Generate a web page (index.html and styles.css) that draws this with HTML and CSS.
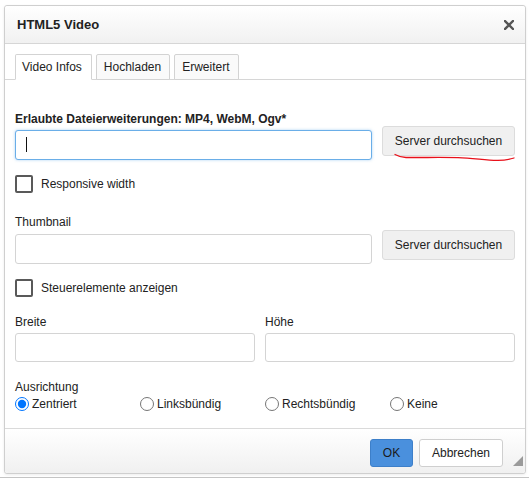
FILE: index.html
```
<!DOCTYPE html>
<html lang="de">
<head>
<meta charset="utf-8">
<title>HTML5 Video</title>
<link rel="stylesheet" href="styles.css">
</head>
<body>
<div class="dialog">
  <div class="titlebar">
    <span class="title">HTML5 Video</span>
    <svg class="close" width="10" height="10" viewBox="0 0 10 10"><path d="M1 1L9 9M9 1L1 9" stroke="#555" stroke-width="2.4" stroke-linecap="square"/></svg>
  </div>
  <div class="tabs">
    <div class="tab active">Video Infos</div>
    <div class="tab">Hochladen</div>
    <div class="tab">Erweitert</div>
  </div>
  <div class="content">
    <div class="row first">
      <div class="col">
        <div class="label bold">Erlaubte Dateierweiterungen: MP4, WebM, Ogv*</div>
        <div class="field-wrap">
          <input class="field focused" type="text">
          <span class="caret"></span>
        </div>
      </div>
      <div class="browse-wrap">
        <button class="btn browse">Server durchsuchen</button>
        <svg class="scribble" width="124" height="10" viewBox="0 0 124 10"><path d="M2 1.5 C5 3.2 8 4.3 13 4.5 C30 4.6 50 4.3 65 4.6 C80 5 92 7.2 104 7.4 C111 7.5 116 6.6 121 5" fill="none" stroke="#e8101a" stroke-width="1.3" stroke-linecap="round"/></svg>
      </div>
    </div>
    <div class="check cb1"><span class="box"></span><span>Responsive width</span></div>
    <div class="row second">
      <div class="col">
        <div class="label">Thumbnail</div>
        <input class="field" type="text">
      </div>
      <div class="browse-wrap">
        <button class="btn browse">Server durchsuchen</button>
      </div>
    </div>
    <div class="check cb2"><span class="box"></span><span>Steuerelemente anzeigen</span></div>
    <div class="dims">
      <div class="col">
        <div class="label">Breite</div>
        <input class="field" type="text">
      </div>
      <div class="col">
        <div class="label">Höhe</div>
        <input class="field" type="text">
      </div>
    </div>
    <div class="label align-label">Ausrichtung</div>
    <div class="radios">
      <label class="radio"><input type="radio" name="a" checked><span>Zentriert</span></label>
      <label class="radio"><input type="radio" name="a"><span>Linksbündig</span></label>
      <label class="radio"><input type="radio" name="a"><span>Rechtsbündig</span></label>
      <label class="radio"><input type="radio" name="a"><span>Keine</span></label>
    </div>
  </div>
  <div class="footer">
    <button class="btn ok">OK</button>
    <button class="btn cancel">Abbrechen</button>
    <svg class="resize" width="10" height="10" viewBox="0 0 10 10"><path d="M10 0L10 10L0 10Z" fill="#9a9a9a"/></svg>
  </div>
</div>
<div class="page-line"></div>
</body>
</html>
```
FILE: styles.css
```
html, body {
  margin: 0;
  padding: 0;
  background: #ffffff;
}
body {
  font-family: "Liberation Sans", Arial, sans-serif;
  font-size: 12px;
  color: #222;
  padding: 5px 0 0 4px;
  width: 529px;
  height: 479px;
  box-sizing: border-box;
  overflow: hidden;
}
.dialog {
  width: 522px;
  height: 469px;
  box-sizing: border-box;
  border: 1px solid #cfcfcf;
  border-radius: 3px;
  background: #fff;
  display: flex;
  flex-direction: column;
  box-shadow: 0 1px 3px rgba(0,0,0,0.08);
}
.titlebar {
  height: 37px;
  flex: none;
  border-bottom: 1px solid #d6d6d6;
  background: linear-gradient(#ffffff, #f1f1f1);
  display: flex;
  align-items: center;
  justify-content: space-between;
  padding: 0 11px 0 12px;
  border-radius: 3px 3px 0 0;
}
.title {
  font-weight: bold;
  font-size: 13px;
  color: #222;
}
.close { display: block; }
.tabs {
  display: flex;
  flex: none;
  gap: 4px;
  padding: 10px 10px 0;
  border-bottom: 1px solid #d6d6d6;
}
.tab {
  height: 26px;
  box-sizing: border-box;
  line-height: 24px;
  padding: 0 8px 0 7px;
  border: 1px solid #d3d3d3;
  border-radius: 2px 2px 0 0;
  background: #fafafa;
  margin-bottom: -1px;
  color: #222;
}
.tab.active {
  background: #fff;
  border-bottom-color: #fff;
  padding: 0 9px 0 6px;
}
.content {
  flex: 1;
  padding: 31px 10px 0 10px;
}
.label {
  line-height: 16px;
  color: #222;
}
.bold { font-weight: bold; }
.row {
  display: flex;
  align-items: flex-end;
  gap: 10px;
}
.col {
  display: flex;
  flex-direction: column;
}
.row .col { width: 357px; }
.field {
  display: block;
  width: 100%;
  height: 30px;
  box-sizing: border-box;
  border: 1px solid #d4d4d4;
  border-radius: 3px;
  background: #fff;
  margin: 0;
  padding: 0 8px;
  font: inherit;
  outline: none;
}
.first .label { margin-bottom: 3px; }
.second .label { margin-bottom: 4px; }
.field-wrap { position: relative; }
.field.focused {
  border-color: #6aaee8;
  box-shadow: 0 0 3px rgba(102, 170, 232, 0.55);
}
.caret {
  position: absolute;
  left: 11px;
  top: 7px;
  width: 1px;
  height: 15px;
  background: #111;
}
.browse-wrap {
  position: relative;
  margin-bottom: 4px;
}
.btn {
  font-family: "Liberation Sans", Arial, sans-serif;
  font-size: 12px;
  color: #222;
  margin: 0;
  cursor: default;
}
.browse {
  display: block;
  width: 133px;
  height: 30px;
  border: 1px solid #dcdcdc;
  border-radius: 3px;
  background: #f0f0f0;
  padding: 0;
}
.scribble {
  position: absolute;
  left: 11px;
  top: 27px;
}
.check {
  display: flex;
  align-items: center;
  gap: 8px;
  height: 18px;
  line-height: 16px;
}
.box {
  width: 18px;
  height: 18px;
  box-sizing: border-box;
  border: 2px solid #595959;
  border-radius: 2px;
  background: #fff;
}
.cb1 { margin-top: 15px; margin-bottom: 21px; }
.cb2 { margin-top: 15px; margin-bottom: 17px; }
.dims {
  display: grid;
  grid-template-columns: 240px 250px;
  gap: 10px;
}
.dims .label { margin-bottom: 3px; }
.dims .field { height: 29px; }
.align-label { margin-top: 17px; }
.radios {
  display: grid;
  grid-template-columns: repeat(4, 1fr);
  margin-top: 1px;
}
.radio {
  display: flex;
  align-items: center;
  gap: 3px;
  height: 16px;
}
.radio input {
  width: 14px;
  height: 14px;
  margin: 0;
}
.footer {
  height: 45px;
  flex: none;
  box-sizing: border-box;
  border-top: 1px solid #dadada;
  background: linear-gradient(#ffffff, #f0f0f0);
  display: flex;
  align-items: flex-end;
  justify-content: flex-end;
  padding: 0 2px 6px 0;
  border-radius: 0 0 3px 3px;
}
.footer .btn {
  height: 28px;
  border-radius: 3px;
  padding: 0;
}
.ok {
  width: 43px;
  background: #4a90dd;
  border: 1px solid #3d7fc9;
  color: #1a1a1a;
}
.cancel {
  width: 84px;
  margin-left: 6px;
  background: #fff;
  border: 1px solid #cfcfcf;
}
.resize {
  display: block;
  margin-left: 10px;
  margin-bottom: 1px;
}
.page-line {
  height: 1px;
  background: #c4c4c4;
  margin: 3px 0 0 -4px;
  width: 529px;
}
```
